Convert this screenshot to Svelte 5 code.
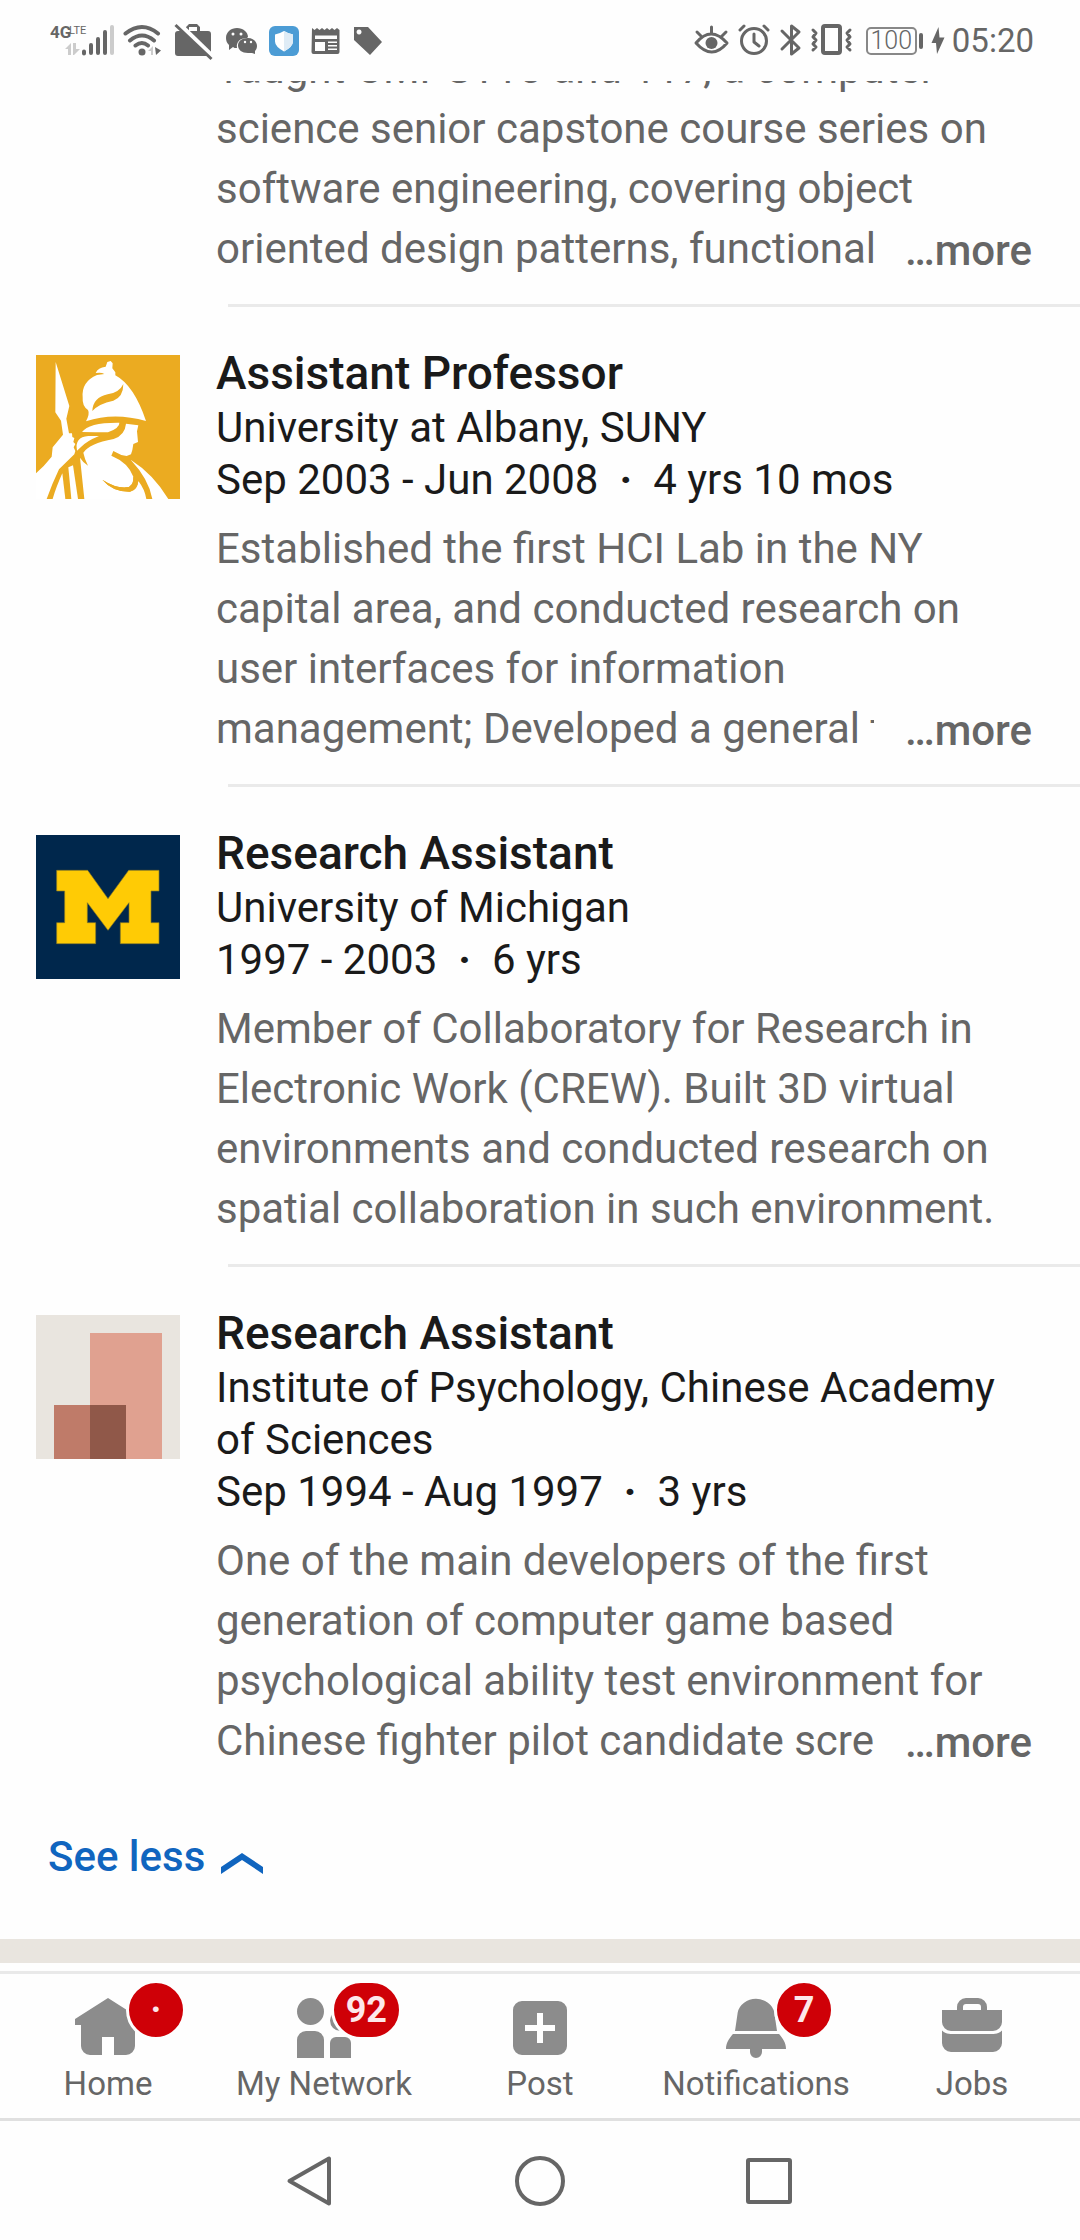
<script>
  const jobs = [
    {
      logo: 'albany',
      title: 'Assistant Professor',
      org: 'University at Albany, SUNY',
      from: 'Sep 2003 - Jun 2008',
      length: '4 yrs 10 mos',
      text: 'Established the first HCI Lab in the NY capital area, and conducted research on user interfaces for information',
      last: 'management; Developed a general t'
    },
    {
      logo: 'michigan',
      title: 'Research Assistant',
      org: 'University of Michigan',
      from: '1997 - 2003',
      length: '6 yrs',
      text: 'Member of Collaboratory for Research in Electronic Work (CREW). Built 3D virtual environments and conducted research on spatial collaboration in such environment.',
      last: ''
    },
    {
      logo: 'generic',
      title: 'Research Assistant',
      org: 'Institute of Psychology, Chinese Academy of Sciences',
      from: 'Sep 1994 - Aug 1997',
      length: '3 yrs',
      text: 'One of the main developers of the first generation of computer game based psychological ability test environment for',
      last: 'Chinese fighter pilot candidate scre'
    }
  ];

  const tabs = [
    { name: 'Home', badge: '·' },
    { name: 'My Network', badge: '92' },
    { name: 'Post', badge: '' },
    { name: 'Notifications', badge: '7' },
    { name: 'Jobs', badge: '' }
  ];
</script>

{#snippet about(text, last)}
  <div class="about">
    <p>{text}</p>
    {#if last}
      <div class="last">
        <span class="clip">{last}</span>
        <button class="more">…more</button>
      </div>
    {/if}
  </div>
{/snippet}

<div class="screen">
  <header class="status">
    <div class="group">
      <svg width="71" height="42" viewBox="48 20 71 42" aria-label="4G LTE signal">
        <text class="net" x="50" y="38">4G</text>
        <text class="lte" x="69" y="34">LTE</text>
        <path class="faint" d="M65 49l6-6v12h-3v-6zM73 43h3v6h4l-6 6h-1z" />
        <path class="bar" d="M84 51.500v2M91 45v8M98 39v14M105 32v21" />
        <path class="bar pale" d="M112 27v26" />
      </svg>
      <svg width="49" height="42" viewBox="119 20 49 42" aria-label="Wi-Fi">
        <path class="line" d="M125.500 33.500Q142 20.500 158 33.500M130 40.500Q142 30.500 154 40.500M135.500 45.500Q142 40.500 148 45.500" />
        <circle cx="142" cy="52" r="3.500" />
        <path class="faint" d="M148 51l5-5v9h-2v-4z" />
        <path d="M155 47l6 3.500-5 4.500z" />
      </svg>
      <svg width="52" height="42" viewBox="168 20 52 42" aria-label="Work profile off">
        <path d="M177 31h9v-4l3-3h8l3 3v4h8q3 0 3 3v20q0 2-3 2h-30q-3 0-3-3v-19q0-3 3-3zM189 27v4h8v-4z" fill-rule="evenodd" />
        <path d="M178 23l34 33" stroke="#fff" stroke-width="5" />
        <path d="M175.500 25l36 34" stroke="#666" stroke-width="3" />
      </svg>
      <svg width="44" height="42" viewBox="220 20 44 42" aria-label="WeChat">
        <path d="M237 28c6 0 11 4 11 9l-1 1c-7 0-11 4-10 10-2 0-3 0-4-1l-4 3v-5c-2-2-3-4-3-7 0-6 5-10 11-10z" />
        <path d="M248 38c5 0 9 3.500 9 8 0 2-1 4-2 5v3l-3-1h-4c-6 0-10-3-10-7.500s4-7.500 10-7.500z" />
        <g fill="#fff"><circle cx="233" cy="34" r="1.500" /><circle cx="241" cy="34" r="1.500" /><circle cx="245" cy="42" r="1.200" /><circle cx="251" cy="42" r="1.200" /></g>
      </svg>
      <svg width="42" height="42" viewBox="264 20 42 42" aria-label="Security">
        <rect x="269" y="26" width="30" height="30" rx="6" fill="#4c9cd5" />
        <path d="M284 31q5 3 9 3.500v7q0 5-9 10-9-5-9-10v-7q4-.5 9-3.500z" fill="#fff" />
        <path d="M284 31q5 3 9 3.500v7q0 5-9 10z" fill="#dfecf6" />
      </svg>
      <svg width="41" height="42" viewBox="306 20 41 42" aria-label="News">
        <path d="M312 28l2.500 2 2.500-2 2.500 2 2.500-2 2.500 2 2.500-2 2.500 2 2.500-2 2.500 2 2.500-2 2.500 2V52q0 2-2 2h-24q-2 0-2-2zM315 35.500v3.500h22v-3.500zM315 42v9h10v-9zM328 41.500v1.500h9v-1.500zM328 45v1.500h9v-1.500zM328 48.500v1.500h9v-1.500z" fill-rule="evenodd" />
      </svg>
      <svg width="43" height="42" viewBox="347 20 43 42" aria-label="Tag">
        <path d="M354 27h14l14 15-12 13-16-15zM359 29.500a2.500 2.500 0 1 0 .1 0z" fill-rule="evenodd" />
      </svg>
    </div>
    <div class="group">
      <svg width="43" height="42" viewBox="688 20 43 42" aria-label="Eye comfort">
        <path class="line thin" d="M694 43q15-18 31 0-15 18-31 0zM709.500 27v6M695 32l4 4M724 32l-4 4" />
        <circle cx="709.500" cy="43" r="6" />
      </svg>
      <svg width="42" height="42" viewBox="732 20 42 42" aria-label="Alarm">
        <circle class="line thin" cx="753" cy="41" r="12.500" />
        <path class="line thin" d="M753 34v8l5 4M739 30l4-4M767 30l-4-4" />
      </svg>
      <svg width="30" height="42" viewBox="774 20 30 42" aria-label="Bluetooth">
        <path class="line slim" d="M781 31l17 17-7.500 6V26l7.500 6-17 17" />
      </svg>
      <svg width="54" height="42" viewBox="804 20 54 42" aria-label="Vibrate">
        <rect class="line" x="822" y="26" width="17" height="27" rx="2" />
        <path class="line thin" d="M812 30l3 3-3 4 3 3-3 4 3 3-3 3M849 30l-3 3 3 4-3 3 3 4-3 3 3 3" />
      </svg>
      <div class="battery">100</div>
      <svg width="23" height="42" viewBox="923 20 23 42" aria-label="Charging">
        <path d="M936.500 27L929.500 43h4.500l1 11L942.500 37.500h-5z" />
      </svg>
      <time>05:20</time>
    </div>
  </header>

  <main>
    <article class="job cut">
      <div class="logo-space"></div>
      <div class="body">
        {@render about(
          'Taught CMPS115 and 117, a computer science senior capstone course series on software engineering, covering object',
          'oriented design patterns, functional'
        )}
      </div>
    </article>

    {#each jobs as job}
      <hr />
      <article class="job">
        {#if job.logo === 'albany'}
          <svg class="logo" viewBox="48 45 432 432" aria-label="University at Albany logo">
            <path d="M48 45h432v432H48z" fill="#ebab21" />
            <g fill="#fff">
              <path d="M107 66L148 198L139 236L147 280L156 280L157 291L163 294L160 306L166 312L161 322L166 333L163 343L117 388Q96 432 80 477H48V400Q72 379 95 350L98 322L129 284L123 242L106 217Z" />
              <path d="M127 400L136 477H98Q108 442 127 400Z" />
              <path d="M145 382L159 376L174 477H154Z" />
              <path d="M198 244Q210 221 204 210Q186 199 188 172Q184 125 231 105L253 102Q244 96 227 99Q234 82 257 80L262 66L272 63L278 70L277 85L286 97L286 106Q342 136 378 243Q282 215 198 244Z" />
              <path d="M186 276Q206 247 298 248Q300 263 264 277Q226 277 186 276Z" />
              <path d="M171 332Q163 291 205 288L237 288Q200 303 183 321Z" />
              <path d="M180 353Q190 369 204 377Q194 358 190 338Q207 311 281 297Q315 285 318 251L355 256L351 274L354 306L340 312L337 330L333 343L320 348L304 345L280 333L274 347Q325 368 340 410Q345 440 318 442Q285 444 247 419Q278 456 330 455Q352 451 355 423Q374 447 379 477H193Z" />
              <path d="M332 359Q401 403 445 477H397Q387 418 332 359Z" />
            </g>
            <path d="M217 213Q219 172 263 163Q298 158 310 132Q310 171 280 182Q236 191 217 213Z" fill="#ebab21" />
            <path d="M247 419Q285 444 318 442Q341 440 340 410L355 423Q352 451 330 455Q278 456 247 419Z" fill="#ebab21" />
          </svg>
        {:else if job.logo === 'michigan'}
          <svg class="logo" viewBox="48 45 432 432" aria-label="University of Michigan logo">
            <path d="M48 45h432v432H48z" fill="#00274c" />
            <path d="M110 151h93l61 85 62-85h91v62h-24v95h24v63H301v-63h26v-60l-63 83-62-83v60h25v63H110v-63h24v-95h-24z" fill="#ffcb05" stroke="#8a7a26" stroke-width="2" />
          </svg>
        {:else}
          <svg class="logo" viewBox="0 0 48 48" aria-label="Company placeholder">
            <path d="M0 0h48v48H0z" fill="#e9e5df" />
            <path d="M18 6h24v42H18z" fill="#e0a190" />
            <path d="M6 30h12v18H6z" fill="#bf7b69" />
            <path d="M18 30h12v18H18z" fill="#905849" />
          </svg>
        {/if}
        <div class="body">
          <h2>{job.title}</h2>
          <div class="meta">{job.org}</div>
          <div class="meta dates"><span>{job.from}</span><b>·</b><span>{job.length}</span></div>
          {@render about(job.text, job.last)}
        </div>
      </article>
    {/each}

    <button class="less">
      See less
      <svg width="42" height="21" viewBox="0 0 42 21" aria-hidden="true"><path d="M0 14L21 0l21 14v7L21 7 0 21z" fill="#1065bf" /></svg>
    </button>
    <div class="band"></div>
  </main>

  <nav class="tabs" aria-label="Main">
    {#each tabs as tab, i}
      <a href="#{i}">
        <span class="icon">
          <svg width="72" height="72" viewBox="0 0 24 24" aria-hidden="true">
            {#if i === 0}
              <path d="M12 2L1 9v2h2v7a3 3 0 0 0 3 3h4v-6h4v6h4a3 3 0 0 0 3-3v-7h2V9z" />
            {:else if i === 1}
              <circle cx="7.500" cy="6.500" r="4.500" />
              <path d="M6 13h3a3 3 0 0 1 3 3v6H3v-6a3 3 0 0 1 3-3z" />
              <circle cx="17.500" cy="9.500" r="3.500" />
              <path d="M16 15h3a2 2 0 0 1 2 2v5h-7v-5a2 2 0 0 1 2-2z" />
            {:else if i === 2}
              <path d="M6 3h12a3 3 0 0 1 3 3v12a3 3 0 0 1-3 3H6a3 3 0 0 1-3-3V6a3 3 0 0 1 3-3zM11 7v4H7v2h4v4h2v-4h4v-2h-4V7z" fill-rule="evenodd" />
            {:else if i === 3}
              <path d="M5 13l.9-6.200a6.200 5.500 0 0 1 12.200 0L19 13zM4.300 14h15.400C21 15.500 22 17 22 19h-8v1a2 2 0 0 1-4 0v-1H2c0-2 1-3.500 2.300-5z" />
            {:else}
              <path d="M7 6V5a3 3 0 0 1 3-3h4a3 3 0 0 1 3 3v1h5v4a3 3 0 0 1-3 3H5a3 3 0 0 1-3-3V6zM9 6h6V5a1 1 0 0 0-1-1h-4a1 1 0 0 0-1 1zM2 12.800A4 4 0 0 0 5 14h14a4 4 0 0 0 3-1.200V17a3 3 0 0 1-3 3H5a3 3 0 0 1-3-3z" fill-rule="evenodd" />
            {/if}
          </svg>
          {#if tab.badge}<span class="badge">{tab.badge}</span>{/if}
        </span>
        <span class="label">{tab.name}</span>
      </a>
    {/each}
  </nav>

  <footer class="system">
    <button aria-label="Back"><svg width="54" height="54" viewBox="0 0 54 54"><path d="M45 4.500v45L5.500 27z" /></svg></button>
    <button aria-label="Home screen"><svg width="54" height="54" viewBox="0 0 54 54"><circle cx="27" cy="27" r="23" /></svg></button>
    <button aria-label="Recent apps"><svg width="54" height="54" viewBox="0 0 54 54"><rect x="6" y="6" width="42" height="42" rx="1" /></svg></button>
  </footer>
</div>

<style>
  :global(body) {
    background: #fefefe;
  }
  .screen {
    display: flex;
    flex-direction: column;
    min-height: 100vh;
    font-family: Roboto, 'Noto Sans', sans-serif;
    font-size: 42px;
    color: #1a1a1a;
  }
  svg {
    display: block;
    flex: none;
  }
  button {
    font: inherit;
    border: 0;
    padding: 0;
    background: none;
    cursor: pointer;
  }
  .status {
    display: flex;
    justify-content: space-between;
    align-items: center;
    height: 81px;
    padding: 0 46px 0 48px;
    box-sizing: border-box;
    color: #666;
    fill: #666;
  }
  .group {
    display: flex;
    align-items: center;
  }
  .net {
    font-size: 17px;
    font-weight: 700;
  }
  .lte {
    font-size: 11px;
  }
  .faint {
    fill: #ccc;
  }
  .bar {
    fill: none;
    stroke: #666;
    stroke-width: 4;
    stroke-linecap: round;
  }
  .pale {
    stroke: #ccc;
  }
  .line {
    fill: none;
    stroke: #666;
    stroke-width: 4;
    stroke-linecap: round;
    stroke-linejoin: round;
  }
  .thin,
  .slim {
    stroke-width: 3;
  }
  .battery {
    position: relative;
    width: 47px;
    height: 24px;
    margin: 0 8px 0 7px;
    border: 2px solid #888;
    border-radius: 5px;
    font-size: 25px;
    font-weight: 300;
    line-height: 24px;
    text-align: center;
  }
  .battery::after {
    content: '';
    position: absolute;
    right: -8px;
    top: 4px;
    width: 4px;
    height: 16px;
    border-radius: 2px;
    background: #666;
  }
  time {
    padding-left: 4px;
    font-size: 33px;
    line-height: 39px;
  }
  main {
    flex: 1;
    overflow: hidden;
  }
  hr {
    height: 3px;
    margin: 0 0 0 228px;
    border: 0;
    background: #eaeaea;
  }
  .job {
    display: flex;
    gap: 36px;
    padding: 37px 48px 25px 36px;
  }
  .cut {
    margin-top: -42px;
    padding-top: 0;
  }
  .logo,
  .logo-space {
    flex: none;
    width: 144px;
  }
  .logo {
    height: 144px;
    margin-top: 11px;
  }
  .body {
    flex: 1;
    min-width: 0;
  }
  h2 {
    margin: 0;
    font-size: 46px;
    font-weight: 500;
    line-height: 58px;
  }
  .meta {
    line-height: 52px;
  }
  .dates {
    display: flex;
    gap: 21px;
    margin-bottom: 13px;
  }
  .about {
    color: #666;
    line-height: 60px;
  }
  p {
    margin: 0;
  }
  .last {
    display: flex;
    align-items: flex-start;
    height: 60px;
  }
  .clip {
    flex: 1;
    overflow: hidden;
    white-space: nowrap;
  }
  .more {
    flex: none;
    padding-left: 31px;
    color: #666;
    font-weight: 500;
    line-height: 64px;
  }
  .less {
    display: flex;
    align-items: center;
    gap: 16px;
    margin: 31px 48px 52px;
    color: #1065bf;
    font-weight: 500;
    line-height: 60px;
  }
  .less svg {
    margin-top: 12px;
  }
  .band {
    height: 24px;
    margin-bottom: 8px;
    background: #e9e5df;
  }
  .tabs {
    display: grid;
    grid-template-columns: repeat(5, 1fr);
    padding: 18px 0 15px;
    border-top: 3px solid #e9e9e9;
    border-bottom: 3px solid #e0e0e0;
  }
  .tabs a {
    display: flex;
    flex-direction: column;
    align-items: center;
    color: #666;
    fill: #8c8c8c;
    text-decoration: none;
  }
  .icon {
    position: relative;
  }
  .badge {
    position: absolute;
    top: -12px;
    right: -42px;
    min-width: 60px;
    height: 60px;
    padding: 0 12px;
    box-sizing: border-box;
    border: 3px solid #fefefe;
    background: #cf0007;
    border-radius: 30px;
    color: #fde7ea;
    font-size: 36px;
    font-weight: 700;
    line-height: 54px;
    text-align: center;
  }
  .label {
    font-size: 33px;
    line-height: 39px;
  }
  .system {
    display: flex;
    justify-content: center;
    align-items: center;
    gap: 175px;
    height: 119px;
  }
  .system svg {
    fill: none;
    stroke: #666;
    stroke-width: 4;
    stroke-linejoin: round;
  }
</style>
